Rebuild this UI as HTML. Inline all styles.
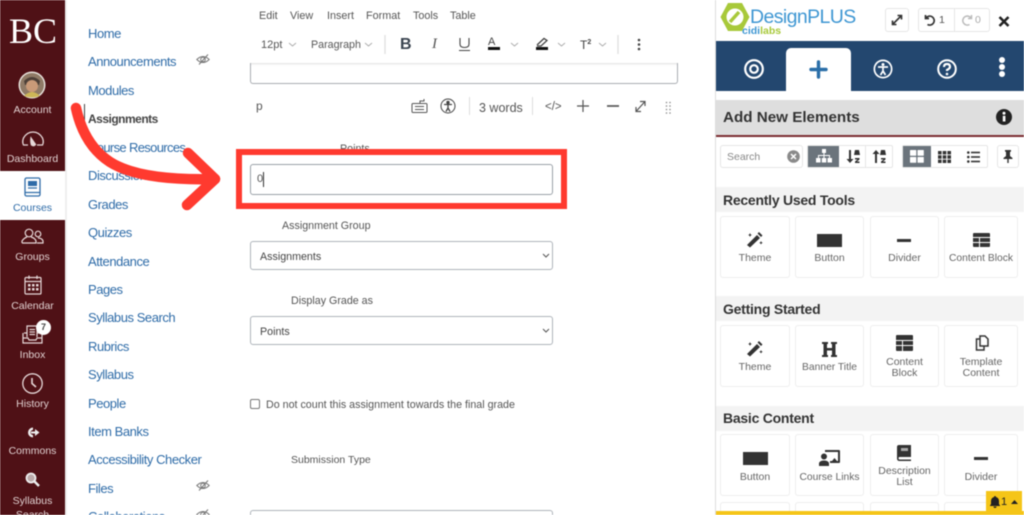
<!DOCTYPE html>
<html><head><meta charset="utf-8"><title>Assignment</title>
<style>
html,body{margin:0;padding:0;background:#fff}
#p{position:relative;width:1024px;height:515px;overflow:hidden;background:#fff;font-family:"Liberation Sans",sans-serif;filter:blur(.4px)}
#p div,#p svg,#p span.a{position:absolute}
.t{white-space:nowrap;line-height:1}
.n{left:88px;font-size:13px;letter-spacing:-.45px;color:#2f6ca8;white-space:nowrap;line-height:1}
.g{left:0;width:65px;margin-top:1px;text-align:center;font-size:10.5px;color:#e0d0d0;line-height:1}
.m{top:11px;font-size:10.8px;color:#555;line-height:1}
.l{margin-top:1px;font-size:10.7px;color:#555;line-height:1;white-space:nowrap}
.tile{border:1px solid #eee;border-radius:3px;background:#fff;box-sizing:border-box}
.cap{margin-top:1px;font-size:10.5px;color:#666;text-align:center;line-height:11px}
.hd{left:716px;width:308px;height:25px;background:#f3f3f3;font-size:14px;letter-spacing:-.25px;font-weight:bold;color:#333;line-height:27px;text-indent:7px}
.sel{left:250px;width:303px;height:29px;box-sizing:border-box;border:1px solid #aeb4ba;border-radius:3px;background:#fff;font-size:10.7px;color:#444;line-height:30px;text-indent:9px}
</style></head><body><div id="p">

<!-- global nav -->
<div style="left:0;top:0;width:65px;height:515px;background:#4f1116"></div>
<div style="left:65px;top:0;width:2px;height:515px;background:#eee"></div>
<div style="left:0;top:171px;width:65px;height:49px;background:#fff"></div>
<div class="t" style="left:9px;top:13px;font:36px/1 'Liberation Serif',serif;color:#fff">BC</div>
<svg style="left:18px;top:71px" width="28" height="28" viewBox="0 0 28 28"><circle cx="14" cy="14" r="13.5" fill="#e8e2dc"/><circle cx="14" cy="14" r="12" fill="#8f7a66"/><path d="M6 10Q14 2 22 10L21 14H7Z" fill="#4d4038"/><circle cx="14" cy="15" r="6" fill="#c99a78"/><path d="M6 25Q14 17 22 25Q14 28 6 25Z" fill="#cdb657"/></svg>
<div class="g" style="top:104px">Account</div>
<svg style="left:21px;top:130px" width="24" height="18" viewBox="0 0 24 18" fill="none" stroke="#e6d8d8" stroke-width="1.3"><path d="M7 15H2.500Q1 12 2.500 8Q6 2 12 2Q18 2 21.500 8Q23 12 21.500 15H16"/><path d="M10 8L14.500 14.500Q13 16.500 10.500 15Q9.500 12 10 8Z" fill="#e6d8d8"/></svg>
<div class="g" style="top:153px">Dashboard</div>
<svg style="left:24px;top:177px" width="17" height="20" viewBox="0 0 17 20" fill="none" stroke="#2f6ca8" stroke-width="1.3"><rect x="1" y="1" width="15" height="18" rx="1.500"/><rect x="4" y="4" width="9" height="5" fill="#2f6ca8" stroke="none"/><path d="M4 11H13M1 15.500H16"/></svg>
<div class="g" style="top:202px;color:#2f6ca8">Courses</div>
<svg style="left:21px;top:228px" width="23" height="16" viewBox="0 0 23 16" fill="none" stroke="#e6d8d8" stroke-width="1.200"><circle cx="8" cy="5" r="3.800"/><path d="M1 15V13Q3 10 6 9M10 9Q14 10 15 13V15H1"/><circle cx="17" cy="6" r="2.800"/><path d="M17 10Q21 10 22 13V15H16"/></svg>
<div class="g" style="top:251px">Groups</div>
<svg style="left:24px;top:275px" width="18" height="20" viewBox="0 0 18 20" fill="none" stroke="#e6d8d8" stroke-width="1.200"><rect x="1" y="2.500" width="16" height="16.500" rx="1"/><path d="M1 6.500H17M5 .5V4M13 .5V4"/><path d="M4 9h2.500v2.500H4zM8 9h2.500v2.500H8zM12 9h2.500v2.500H12zM4 13h2.500v2.500H4zM8 13h2.500v2.500H8zM12 13h2.500v2.500H12z" fill="#e6d8d8" stroke="none"/></svg>
<div class="g" style="top:300px">Calendar</div>
<svg style="left:22px;top:325px" width="21" height="20" viewBox="0 0 21 20" fill="none" stroke="#e6d8d8" stroke-width="1.200"><path d="M5 12V1H15V12M2 8H5M15 8H19M1 8V18H20V8M1 13H6L7 15H14L15 13H20M7.500 4.500H13M7.500 7H13M7.500 9.500H13"/></svg>
<div style="left:36px;top:320px;width:15px;height:15px;border-radius:50%;background:#fff;color:#444;font-size:9px;font-weight:bold;text-align:center;line-height:15px">7</div>
<div class="g" style="top:349px">Inbox</div>
<svg style="left:22px;top:373px" width="21" height="21" viewBox="0 0 21 21" fill="none" stroke="#e6d8d8" stroke-width="1.300"><circle cx="10.500" cy="10.500" r="9.700"/><path d="M10 5V10.500L14 14" stroke-width="1.600"/></svg>
<div class="g" style="top:398px">History</div>
<svg style="left:25px;top:426px" width="15" height="13" viewBox="0 0 15 13" fill="#eee"><path d="M8 1.500A5 5 0 1 0 8 11.500V9A2.500 2.500 0 1 1 8 4Z"/><path d="M6 5.500H10V3L14.500 6.500L10 10V7.500H6Z"/></svg>
<div class="g" style="top:445px">Commons</div>
<svg style="left:25px;top:472px" width="15" height="15" viewBox="0 0 15 15" fill="none" stroke="#eee" stroke-width="1.800"><circle cx="6" cy="6" r="4.500" fill="#bbaaaa"/><path d="M9.500 9.500L14 14" stroke-width="2.500"/></svg>
<div class="g" style="top:495px">Syllabus</div>
<div class="g" style="top:509px">Search</div>

<!-- course nav -->
<div class="n" style="top:27px">Home</div>
<div class="n" style="top:55px">Announcements</div>
<svg style="left:196px;top:53px" width="14" height="13" viewBox="0 0 14 13" fill="none" stroke="#777" stroke-width="1"><path d="M.8 6.500Q7 .5 13.200 6.500Q7 12.500 .8 6.500Z"/><circle cx="7" cy="6.500" r="2.300"/><path d="M3 11.500L12 1.500"/></svg>
<div class="n" style="top:84px">Modules</div>
<div style="left:84px;top:104px;width:1px;height:22px;background:#444"></div>
<div class="n" style="top:113px;font-weight:bold;color:#444;font-size:12px;letter-spacing:-.5px">Assignments</div>
<div class="n" style="top:141px;letter-spacing:-.65px">Course Resources</div>
<div class="n" style="top:169px">Discussions</div>
<div class="n" style="top:198px">Grades</div>
<div class="n" style="top:226px">Quizzes</div>
<div class="n" style="top:255px">Attendance</div>
<div class="n" style="top:283px">Pages</div>
<div class="n" style="top:311px">Syllabus Search</div>
<div class="n" style="top:340px">Rubrics</div>
<div class="n" style="top:368px">Syllabus</div>
<div class="n" style="top:397px">People</div>
<div class="n" style="top:425px">Item Banks</div>
<div class="n" style="top:453px">Accessibility Checker</div>
<div class="n" style="top:482px">Files</div>
<svg style="left:196px;top:479px" width="14" height="13" viewBox="0 0 14 13" fill="none" stroke="#777" stroke-width="1"><path d="M.8 6.500Q7 .5 13.200 6.500Q7 12.500 .8 6.500Z"/><circle cx="7" cy="6.500" r="2.300"/><path d="M3 11.500L12 1.500"/></svg>
<div class="n" style="top:510px">Collaborations</div>
<svg style="left:196px;top:508px" width="14" height="13" viewBox="0 0 14 13" fill="none" stroke="#777" stroke-width="1"><path d="M.8 6.500Q7 .5 13.200 6.500Q7 12.500 .8 6.500Z"/><circle cx="7" cy="6.500" r="2.300"/><path d="M3 11.500L12 1.500"/></svg>

<!-- editor toolbar -->
<div class="m" style="left:259px">Edit</div>
<div class="m" style="left:290px">View</div>
<div class="m" style="left:327px">Insert</div>
<div class="m" style="left:366px">Format</div>
<div class="m" style="left:413px">Tools</div>
<div class="m" style="left:450px">Table</div>
<div class="l" style="left:261px;top:39px;font-size:11px">12pt</div>
<div class="l" style="left:311px;top:39px">Paragraph</div>
<svg style="left:240px;top:30px" width="430" height="30" fill="none" stroke="#aaa" stroke-width=".9"><path d="M49 13l3.500 3 3.500-3M125 13l3.500 3 3.500-3M271 13l3.500 3 3.500-3M318 13l3.500 3 3.500-3M359 13l3.500 3 3.500-3"/><path d="M145 5V24M378 5V24" stroke="#ddd" stroke-width="1.200"/></svg>
<div class="t" style="left:400px;top:37px;font-size:16px;font-weight:bold;color:#3a4450">B</div>
<div class="t" style="left:432px;top:37px;font:italic 15px/1 'Liberation Serif',serif;color:#555">I</div>
<svg style="left:458px;top:37px" width="13" height="15" fill="none" stroke="#444" stroke-width="1.100"><path d="M2 1V7Q2 10.500 6.500 10.500Q11 10.500 11 7V1M1 13.500H12"/></svg>
<div class="t" style="left:488px;top:37px;font-size:11px;color:#444">A</div>
<div style="left:488px;top:47px;width:12px;height:3px;background:#111"></div>
<svg style="left:535px;top:37px" width="14" height="10" fill="none" stroke="#444" stroke-width="1.300"><path d="M2 8L9 1.500L12 3.500L6 9H2"/></svg>
<div style="left:536px;top:47px;width:12px;height:3px;background:#111"></div>
<div class="t" style="left:580px;top:39px;font-size:12px;color:#444">T<span style="font-size:7px;font-weight:bold;vertical-align:5px">2</span></div>
<svg style="left:637px;top:38px" width="4" height="13" fill="#444"><circle cx="2" cy="2" r="1.300"/><circle cx="2" cy="6.500" r="1.300"/><circle cx="2" cy="11" r="1.300"/></svg>
<div style="left:250px;top:63px;width:428px;height:21px;box-sizing:border-box;border:1px solid #a9adb2;border-top:0;border-radius:0 0 3px 3px;box-shadow:inset 0 3px 2px -2px #ddd"></div>

<!-- status bar -->
<div class="l" style="left:256px;top:99px;font-size:12px">p</div>
<svg style="left:411px;top:98px" width="18" height="16" fill="none" stroke="#555" stroke-width="1"><rect x="1" y="5.500" width="15" height="9" rx="1"/><path d="M9 5.500V3H13V1M4 8.500H13M4 11.500H13"/></svg>
<svg style="left:440px;top:98px" width="16" height="16" fill="none" stroke="#444" stroke-width="1"><circle cx="8" cy="8" r="7"/><circle cx="8" cy="4.500" r="1.200" fill="#444"/><path d="M4 6.500H12M8 6.500V10M8 10L6 13.500M8 10L10 13.500" stroke-width="1.300"/></svg>
<div style="left:469px;top:97px;width:1px;height:18px;background:#ddd"></div>
<div class="l" style="left:479px;top:101px;font-size:12.500px">3 words</div>
<div style="left:532px;top:97px;width:1px;height:18px;background:#ddd"></div>
<div class="l" style="left:545px;top:101px;font-size:11.500px">&lt;/&gt;</div>
<svg style="left:576px;top:99px" width="70" height="14" fill="none" stroke="#555" stroke-width="1.200"><path d="M1 7H13M7 1V13"/><path d="M31 7H43" stroke-width="1.700"/><path d="M60 12.500L69 2.500M64 2.500H69V7M60 8V12.500H65"/></svg>
<svg style="left:665px;top:101px" width="7" height="13" fill="#888"><circle cx="1.500" cy="1.500" r=".8"/><circle cx="5" cy="1.500" r=".8"/><circle cx="1.500" cy="5" r=".8"/><circle cx="5" cy="5" r=".8"/><circle cx="1.500" cy="8.500" r=".8"/><circle cx="5" cy="8.500" r=".8"/><circle cx="1.500" cy="12" r=".8"/><circle cx="5" cy="12" r=".8"/></svg>

<!-- form -->
<div class="l" style="left:340px;top:143px">Points</div>
<div style="left:250px;top:164px;width:303px;height:31px;box-sizing:border-box;border:1px solid #9aa1a8;border-radius:3px;background:#fff"></div>
<div class="l" style="left:257px;top:173px;font-size:11px">0</div>
<div style="left:263px;top:172px;width:1px;height:15px;background:#333"></div>
<div style="left:236px;top:149px;width:331px;height:60px;box-sizing:border-box;border:6px solid #ff3a2f"></div>
<div class="l" style="left:282px;top:220px">Assignment Group</div>
<div class="sel" style="top:241px">Assignments</div>
<div class="l" style="left:291px;top:295px">Display Grade as</div>
<div class="sel" style="top:316px">Points</div>
<svg style="left:542px;top:253px" width="8" height="6" fill="none" stroke="#555" stroke-width="1"><path d="M1 1L4 4L7 1"/></svg>
<svg style="left:542px;top:328px" width="8" height="6" fill="none" stroke="#555" stroke-width="1"><path d="M1 1L4 4L7 1"/></svg>
<div style="left:250px;top:399px;width:10px;height:10px;box-sizing:border-box;border:1px solid #777;border-radius:2px"></div>
<div class="l" style="left:266px;top:399px">Do not count this assignment towards the final grade</div>
<div class="l" style="left:291px;top:454px;font-size:10.500px">Submission Type</div>
<div style="left:250px;top:510px;width:303px;height:12px;box-sizing:border-box;border:1px solid #aeb4ba;border-radius:3px"></div>

<!-- red arrow -->
<svg style="left:0;top:0" width="240" height="230" fill="none" stroke="#ff3a2f" stroke-width="10.500" stroke-linecap="round" stroke-linejoin="round"><path d="M76 108Q84 145 110 162Q140 181 215 179"/><path d="M188 153L215 179L187 205"/></svg>

<!-- right panel -->
<div style="left:715px;top:0;width:1px;height:515px;background:#ddd"></div>
<svg style="left:720px;top:2px" width="30" height="30" viewBox="0 0 30 30"><path d="M8 1H22L29.500 15L22 29H8L.5 15Z" fill="#a8c93a"/><circle cx="15" cy="15" r="8.500" fill="#fff"/><path d="M10 20L19 10" stroke="#a8c93a" stroke-width="3.500"/></svg>
<div class="t" style="left:750px;top:8px;font-size:19.500px;letter-spacing:-.6px;color:#3f97d3">DesignPLUS</div>
<div class="t" style="left:742px;top:26px;font-size:10.500px;font-weight:bold;color:#3f97d3">cidi<span style="color:#a8c93a">labs</span></div>
<div style="left:885px;top:8px;width:24px;height:24px;box-sizing:border-box;border:1px solid #e6e6e6;border-radius:3px"></div>
<svg style="left:891px;top:14px" width="12" height="12" fill="none" stroke="#333" stroke-width="1.600"><path d="M1.500 10.500L10.500 1.500M6.500 1.500H10.500V5.500M1.500 6.500V10.500H5.500"/></svg>
<div style="left:918px;top:8px;width:72px;height:24px;box-sizing:border-box;border:1px solid #e6e6e6;border-radius:3px"></div>
<div style="left:954px;top:9px;width:1px;height:22px;background:#e6e6e6"></div>
<svg style="left:924px;top:14px" width="12" height="12" fill="none" stroke="#333" stroke-width="1.700"><path d="M1.500 1V4.500H5M2 4A4.500 4.500 0 1 1 3.500 10.500"/></svg>
<div class="t" style="left:939px;top:15px;font-size:10.500px;color:#555">1</div>
<svg style="left:961px;top:14px" width="12" height="12" fill="none" stroke="#bbb" stroke-width="1.500"><path d="M10.500 1V4.500H7M10 4A4.500 4.500 0 1 0 8.500 10.500"/></svg>
<div class="t" style="left:975px;top:15px;font-size:10.500px;color:#aaa">0</div>
<svg style="left:998px;top:16px" width="12" height="11" fill="none" stroke="#222" stroke-width="2.600"><path d="M1.500 1L10.500 10M10.500 1L1.500 10"/></svg>

<div style="left:716px;top:41px;width:308px;height:50px;background:#23476f"></div>
<div style="left:786px;top:48px;width:65px;height:43px;background:#fff;border-radius:5px 5px 0 0"></div>
<svg style="left:744px;top:59px" width="20" height="20" fill="none" stroke="#fff" stroke-width="2.200"><circle cx="10" cy="10" r="8.800"/><circle cx="10" cy="10" r="3.800"/></svg>
<svg style="left:809px;top:60px" width="19" height="19" fill="none" stroke="#2a6ea8" stroke-width="3.400" stroke-linecap="round"><path d="M2 9.500H17M9.500 2V17"/></svg>
<svg style="left:873px;top:59px" width="20" height="20"><circle cx="10" cy="10" r="9.500" fill="#fff"/><circle cx="10" cy="10" r="7.800" fill="#23476f"/><circle cx="10" cy="5.500" r="1.500" fill="#fff"/><path d="M5 8H15M10 8V12M10 12L7.500 16M10 12L12.500 16" stroke="#fff" stroke-width="1.700" fill="none"/></svg>
<svg style="left:937px;top:59px" width="20" height="20" fill="none" stroke="#fff" stroke-width="2"><circle cx="10" cy="10" r="8.800"/><path d="M7 8Q7 5 10 5Q13 5 13 7.800Q13 9.500 10 11V12" stroke-width="2.200"/><circle cx="10" cy="15" r="1.300" fill="#fff" stroke="none"/></svg>
<svg style="left:998px;top:57px" width="8" height="20" fill="#fff"><circle cx="4" cy="3" r="3"/><circle cx="4" cy="10" r="3"/><circle cx="4" cy="17" r="3"/></svg>

<div style="left:716px;top:100px;width:308px;height:35px;background:#dedede;border-bottom:2px solid #7b2d31;box-sizing:content-box"></div>
<div class="t" style="left:723px;top:110px;font-size:15.200px;font-weight:bold;color:#333">Add New Elements</div>
<svg style="left:996px;top:109px" width="16" height="16"><circle cx="8" cy="8" r="8" fill="#222"/><rect x="6.800" y="6.800" width="2.600" height="5.700" fill="#fff"/><circle cx="8" cy="4.300" r="1.500" fill="#fff"/></svg>

<!-- search row -->
<div style="left:720px;top:145px;width:83px;height:23px;box-sizing:border-box;border:1px solid #e6e6e6;border-radius:3px"></div>
<div class="t" style="left:727px;top:152px;font-size:10.500px;color:#888">Search</div>
<svg style="left:787px;top:150px" width="13" height="13"><circle cx="6.500" cy="6.500" r="6.300" fill="#8a8a8a"/><path d="M4 4L9 9M9 4L4 9" stroke="#fff" stroke-width="1.500"/></svg>
<div style="left:807px;top:145px;width:86px;height:23px;box-sizing:border-box;border:1px solid #e6e6e6;border-radius:2px"></div>
<div style="left:808px;top:146px;width:31px;height:21px;background:#6b747c"></div>
<svg style="left:816px;top:149px" width="16" height="14" fill="#fff"><rect x="6" y="0" width="4" height="4"/><rect x="0" y="9" width="4.500" height="4.500"/><rect x="5.800" y="9" width="4.500" height="4.500"/><rect x="11.500" y="9" width="4.500" height="4.500"/><path d="M7.500 4H8.500V6H14V9H13V7H8.500V9H7.500V7H3V9H2V6H7.500Z"/></svg>
<div style="left:865px;top:146px;width:1px;height:21px;background:#e6e6e6"></div>
<svg style="left:846px;top:149px" width="44" height="15" fill="#333"><path d="M3 1H5V10H7.500L4 14L.5 10H3Z"/><path d="M29 14H31V5H33.500L30 1L26.500 5H29Z"/><path d="M9 1H13L14 6H8Z M9 9H13.500V10.500L11 12.500H13.500V14H9V12.500L11.500 10.500H9Z M35 1H39L40 6H34Z M35 9H39.500V10.500L37 12.500H39.500V14H35V12.500L37.500 10.500H35Z"/></svg>
<div style="left:902px;top:145px;width:86px;height:23px;box-sizing:border-box;border:1px solid #e6e6e6;border-radius:2px"></div>
<div style="left:903px;top:146px;width:28px;height:21px;background:#6b747c"></div>
<svg style="left:910px;top:150px" width="14" height="13" fill="#fff"><rect width="6.300" height="5.800" rx=".5"/><rect x="7.500" width="6.300" height="5.800" rx=".5"/><rect y="7" width="6.300" height="5.800" rx=".5"/><rect x="7.500" y="7" width="6.300" height="5.800" rx=".5"/></svg>
<svg style="left:938px;top:151px" width="13" height="12" fill="#333"><path d="M0 0h3.600v3.400H0zM4.700 0h3.600v3.400H4.700zM9.400 0h3.600v3.400H9.400zM0 4.300h3.600v3.400H0zM4.700 4.300h3.600v3.400H4.700zM9.400 4.300h3.600v3.400H9.400zM0 8.600h3.600V12H0zM4.700 8.600h3.600V12H4.700zM9.400 8.600h3.600V12H9.400z"/></svg>
<svg style="left:967px;top:151px" width="13" height="12" fill="#333"><circle cx="1.300" cy="1.500" r="1.300"/><circle cx="1.300" cy="6" r="1.300"/><circle cx="1.300" cy="10.500" r="1.300"/><rect x="4" y=".7" width="9" height="1.600"/><rect x="4" y="5.200" width="9" height="1.600"/><rect x="4" y="9.700" width="9" height="1.600"/></svg>
<div style="left:997px;top:145px;width:22px;height:23px;box-sizing:border-box;border:1px solid #e6e6e6;border-radius:3px"></div>
<svg style="left:1003px;top:150px" width="10" height="13" fill="#333"><path d="M2 0H8V1.500L7 2V6L9.500 8V9H5.700V13H4.300V9H.5V8L3 6V2L2 1.500Z"/></svg>

<!-- section 1 -->
<div class="hd" style="top:187px">Recently Used Tools</div>
<div class="tile" style="left:720px;top:216px;width:70px;height:62px"></div>
<div class="tile" style="left:795px;top:216px;width:69px;height:62px"></div>
<div class="tile" style="left:870px;top:216px;width:69px;height:62px"></div>
<div class="tile" style="left:944px;top:216px;width:74px;height:62px"></div>
<svg style="left:746px;top:231px" width="18" height="17" fill="#333"><path d="M1 14L11 4L14 7L4 16.500Z"/><path d="M13 1L16.500 4.500L15 6L11.500 2.500Z"/><path d="M4 2l.7 1.500L6 4l-1.300.5L4 6l-.7-1.500L2 4l1.300-.5zM15 10l.6 1.200 1.200.6-1.200.6L15 13.500l-.6-1.100-1.200-.6 1.200-.6z"/></svg>
<div class="cap" style="left:720px;top:252px;width:70px">Theme</div>
<div style="left:817px;top:234px;width:25px;height:13px;background:#333"></div>
<div class="cap" style="left:795px;top:252px;width:69px">Button</div>
<div style="left:897px;top:239px;width:14px;height:3px;background:#333"></div>
<div class="cap" style="left:870px;top:252px;width:69px">Divider</div>
<svg style="left:973px;top:233px" width="17" height="14" fill="#333"><path d="M0 1a1 1 0 0 1 1-1h15a1 1 0 0 1 1 1v3H0zM0 5h6v4H0zM7 5h10v4H7zM0 10h6v4H1a1 1 0 0 1-1-1zM7 10h10v3a1 1 0 0 1-1 1H7z"/></svg>
<div class="cap" style="left:944px;top:252px;width:74px;font-size:10.300px">Content Block</div>

<!-- section 2 -->
<div class="hd" style="top:296px">Getting Started</div>
<div class="tile" style="left:720px;top:325px;width:70px;height:62px"></div>
<div class="tile" style="left:795px;top:325px;width:69px;height:62px"></div>
<div class="tile" style="left:870px;top:325px;width:69px;height:62px"></div>
<div class="tile" style="left:944px;top:325px;width:74px;height:62px"></div>
<svg style="left:746px;top:340px" width="18" height="17" fill="#333"><path d="M1 14L11 4L14 7L4 16.500Z"/><path d="M13 1L16.500 4.500L15 6L11.500 2.500Z"/><path d="M4 2l.7 1.500L6 4l-1.300.5L4 6l-.7-1.500L2 4l1.300-.5zM15 10l.6 1.200 1.200.6-1.200.6L15 13.500l-.6-1.100-1.200-.6 1.200-.6z"/></svg>
<div class="cap" style="left:720px;top:361px;width:70px">Theme</div>
<svg style="left:822px;top:342px" width="15" height="15" fill="#333"><path d="M0 0H6V2H5V6H10V2H9V0H15V2H13.500V13H15V15H9V13H10V8.500H5V13H6V15H0V13H1.500V2H0Z"/></svg>
<div class="cap" style="left:795px;top:361px;width:69px;font-size:10.300px">Banner Title</div>
<svg style="left:896px;top:335px" width="17" height="16" fill="#333"><path d="M0 1a1 1 0 0 1 1-1h15a1 1 0 0 1 1 1v4H0zM0 6h6v4H0zM7 6h10v4H7zM0 11h6v5H1a1 1 0 0 1-1-1zM7 11h10v4a1 1 0 0 1-1 1H7z"/></svg>
<div class="cap" style="left:870px;top:356px;width:69px">Content<br>Block</div>
<svg style="left:975px;top:335px" width="14" height="16" fill="none" stroke="#333" stroke-width="1.500"><path d="M5 1H10L13 4V11H5Z"/><path d="M5 4H1.500V15H9V11"/></svg>
<div class="cap" style="left:944px;top:356px;width:74px">Template<br>Content</div>

<!-- section 3 -->
<div class="hd" style="top:406px;line-height:25px">Basic Content</div>
<div class="tile" style="left:720px;top:434px;width:70px;height:62px"></div>
<div class="tile" style="left:795px;top:434px;width:69px;height:62px"></div>
<div class="tile" style="left:870px;top:434px;width:69px;height:62px"></div>
<div class="tile" style="left:944px;top:434px;width:74px;height:62px"></div>
<div style="left:743px;top:452px;width:25px;height:13px;background:#333"></div>
<div class="cap" style="left:720px;top:471px;width:70px">Button</div>
<svg style="left:819px;top:450px" width="21" height="16" fill="#333"><circle cx="5" cy="6.500" r="3"/><path d="M0 16V13Q1 10.500 5 10.500Q9 10.500 10 13V16Z"/><path d="M6 1.500V0H20a1 1 0 0 1 1 1V12a1 1 0 0 1-1 1H11V11H19V2H6Z"/><path d="M13 11L15.500 8L18 11Z"/></svg>
<div class="cap" style="left:795px;top:471px;width:69px;font-size:10.300px">Course Links</div>
<svg style="left:897px;top:445px" width="14" height="16"><path d="M2 0H14V12H2.500Q1.500 12 1.500 13.200Q1.500 14.500 2.500 14.500H14V16H2.500Q0 16 0 13.500V2Q0 0 2 0Z" fill="#333"/><rect x="4" y="3" width="7" height="3" fill="#aaa"/></svg>
<div class="cap" style="left:870px;top:465px;width:69px">Description<br>List</div>
<div style="left:974px;top:457px;width:14px;height:3px;background:#333"></div>
<div class="cap" style="left:944px;top:471px;width:74px">Divider</div>
<div class="tile" style="left:720px;top:502px;width:70px;height:30px"></div>
<div class="tile" style="left:795px;top:502px;width:69px;height:30px"></div>
<div class="tile" style="left:870px;top:502px;width:69px;height:30px"></div>
<div class="tile" style="left:944px;top:502px;width:74px;height:30px"></div>

<div style="left:716px;top:511px;width:308px;height:4px;background:#f5c518"></div>
<div style="left:986px;top:491px;width:36px;height:21px;background:#f5c518"></div>
<svg style="left:990px;top:496px" width="10" height="12" fill="#222"><path d="M5 0Q6 0 6 1Q9 2 9 5V8L10 9.500V10H0V9.500L1 8V5Q1 2 4 1Q4 0 5 0ZM3.500 10.500H6.500Q6.500 12 5 12Q3.500 12 3.500 10.500Z"/></svg>
<div class="t" style="left:1001px;top:497px;font-size:11px;color:#222">1</div>
<svg style="left:1011px;top:500px" width="7" height="4" fill="#222"><path d="M0 4L3.500 0L7 4Z"/></svg>

</div></body></html>
